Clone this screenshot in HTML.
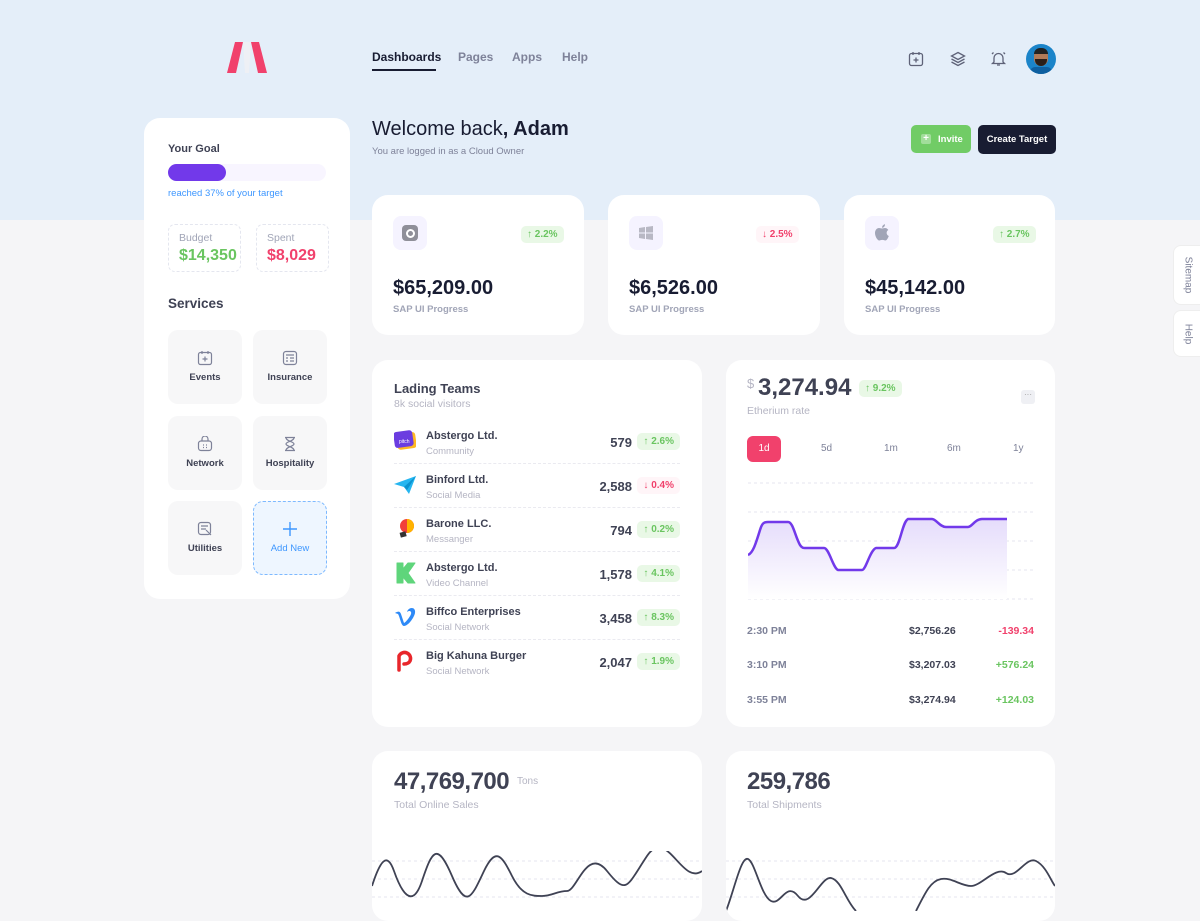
<!DOCTYPE html>
<html><head><meta charset="utf-8"><style>
*{box-sizing:border-box;margin:0;padding:0}
body{width:1200px;height:900px;overflow:hidden;font-family:"Liberation Sans",sans-serif;background:#f5f5f7;position:relative;color:#181c32}
.top{position:absolute;left:0;top:0;width:1200px;height:220px;background:#e4eef9}
.abs{position:absolute}
.card{position:absolute;background:#fff;border-radius:16px}
.nav{font-size:12px;font-weight:bold;color:#7e8299;top:50px}
.badge{position:absolute;font-size:10px;font-weight:bold;padding:3px 6px;border-radius:5px;background:#e9f8e6;color:#6ac560}
.badge.r{background:#fff5f8;color:#f1416c}
.svc{position:absolute;width:74px;height:74px;background:#f7f7f8;border-radius:10px;text-align:center;font-size:9.5px;font-weight:bold;color:#3f4254}
.svc svg{display:block;margin:20px auto 6px}
.row{position:absolute;left:22px;width:286px;height:44px}
.row .n{position:absolute;left:32px;top:4px;font-size:11px;font-weight:bold;color:#3f4254}
.row .s{position:absolute;left:32px;top:20px;font-size:9.5px;color:#b5b5c3}
.row .v{position:absolute;right:48px;top:9px;font-size:13px;font-weight:bold;color:#3f4254}
.row .badge{right:0;top:7px}
.row .ic{position:absolute;left:0;top:4px;width:22px;height:22px}
.dash{position:absolute;left:22px;width:286px;border-top:1px dashed #eaeaf0}
.tab{position:absolute;left:1173px;width:30px;background:#fff;border-radius:8px 0 0 8px;border:1px solid #eee}
.tab span{position:absolute;left:50%;top:50%;transform:translate(-50%,-50%) rotate(90deg);font-size:10px;color:#7e8299;white-space:nowrap}
</style></head><body>
<div class="top"></div>
<svg class="abs" style="left:226px;top:42px" width="42" height="32" viewBox="0 0 42 32"><path d="M9 0h8L10 31H1z" fill="#f1416c"/><path d="M25 0h8l8 31h-9z" fill="#f1416c"/><path d="M17 0h8l-2 31h-4z" fill="#eef0f5"/></svg>
<div class="abs nav" style="left:372px;color:#181c32">Dashboards</div>
<div class="abs" style="left:372px;top:69px;width:64px;height:2px;background:#181c32"></div>
<div class="abs nav" style="left:458px">Pages</div>
<div class="abs nav" style="left:512px">Apps</div>
<div class="abs nav" style="left:562px">Help</div>
<svg class="abs" style="left:908px;top:51px" width="16" height="16" viewBox="0 0 16 16" fill="none" stroke="#5e6278" stroke-width="1.3"><rect x="1.5" y="2.5" width="13" height="12" rx="2"/><path d="M5 1v3M11 1v3M8 6.5v5M5.5 9h5"/></svg>
<svg class="abs" style="left:950px;top:51px" width="16" height="16" viewBox="0 0 16 16" fill="none" stroke="#5e6278" stroke-width="1.3"><path d="M8 1.5l6.5 3.5L8 8.5 1.5 5z"/><path d="M1.5 8L8 11.5 14.5 8M1.5 11L8 14.5 14.5 11"/></svg>
<svg class="abs" style="left:990px;top:50px" width="17" height="17" viewBox="0 0 17 17" fill="none" stroke="#5e6278" stroke-width="1.3"><path d="M4 12V8a4.5 4.5 0 019 0v4l1.5 1.5h-12zM7 15h3M2 4l1.5-1.5M15 4l-1.5-1.5"/></svg>
<div class="abs" style="left:1026px;top:44px;width:30px;height:30px;border-radius:50%;background:#1b84c9;overflow:hidden"><div style="position:absolute;left:8px;top:5px;width:14px;height:17px;border-radius:7px;background:#b07a58"></div><div style="position:absolute;left:8px;top:4px;width:14px;height:6px;border-radius:7px 7px 0 0;background:#222"></div><div style="position:absolute;left:9px;top:15px;width:12px;height:7px;border-radius:0 0 6px 6px;background:#2a1e18"></div><div style="position:absolute;left:4px;top:23px;width:22px;height:10px;border-radius:8px;background:#0e5fa0"></div></div>

<div class="card" style="left:144px;top:118px;width:206px;height:481px">
<div class="abs" style="left:24px;top:25px;font-size:11px;font-weight:bold;color:#3f4254">Your Goal</div>
<div class="abs" style="left:24px;top:46px;width:158px;height:17px;border-radius:9px;background:#f8f5ff"><div style="width:58px;height:17px;border-radius:9px;background:#7239ea"></div></div>
<div class="abs" style="left:24px;top:70px;font-size:9.5px;color:#3e97ff">reached 37% of your target</div>
<div class="abs" style="left:24px;top:106px;width:73px;height:48px;border:1px dashed #e4e6ef;border-radius:7px"><div style="position:absolute;left:10px;top:7px;font-size:10.5px;color:#a1a5b7">Budget</div><div style="position:absolute;left:10px;top:22px;font-size:16px;font-weight:bold;color:#6ac560">$14,350</div></div>
<div class="abs" style="left:112px;top:106px;width:73px;height:48px;border:1px dashed #e4e6ef;border-radius:7px"><div style="position:absolute;left:10px;top:7px;font-size:10.5px;color:#a1a5b7">Spent</div><div style="position:absolute;left:10px;top:22px;font-size:16px;font-weight:bold;color:#f1416c">$8,029</div></div>
<div class="abs" style="left:24px;top:178px;font-size:13.5px;font-weight:bold;color:#3f4254">Services</div>
<div class="svc" style="left:24px;top:212px"><svg width="16" height="16" viewBox="0 0 16 16" fill="none" stroke="#7e8299" stroke-width="1.2"><rect x="1.5" y="2.5" width="13" height="12" rx="2"/><path d="M5 1v3M11 1v3M8 6.5v5M5.5 9h5"/></svg>Events</div>
<div class="svc" style="left:109px;top:212px"><svg width="16" height="16" viewBox="0 0 16 16" fill="none" stroke="#7e8299" stroke-width="1.2"><rect x="1.5" y="1.5" width="13" height="13" rx="2.5"/><path d="M4 5h8M4 8h2M8 8h4M4 11h2M8 11h4"/></svg>Insurance</div>
<div class="svc" style="left:24px;top:298px"><svg width="16" height="16" viewBox="0 0 16 16" fill="none" stroke="#7e8299" stroke-width="1.2"><rect x="1.5" y="5" width="13" height="9.5" rx="2.5"/><path d="M5 5V3a3 3 0 016 0v2M6 9h1M9 9h1M6 11.5h1M9 11.5h1"/></svg>Network</div>
<div class="svc" style="left:109px;top:298px"><svg width="16" height="16" viewBox="0 0 16 16" fill="none" stroke="#7e8299" stroke-width="1.2"><path d="M3 1.5h10M3 14.5h10M4 1.5c0 4 8 4 8 6.5s-8 2.5-8 6.5M12 1.5c0 4-8 4-8 6.5s8 2.5 8 6.5"/></svg>Hospitality</div>
<div class="svc" style="left:24px;top:383px"><svg width="16" height="16" viewBox="0 0 16 16" fill="none" stroke="#7e8299" stroke-width="1.2"><rect x="1.5" y="1.5" width="12" height="12" rx="2.5"/><path d="M4 5h7M4 8h5M9 9l5 5"/></svg>Utilities</div>
<div class="svc" style="left:109px;top:383px;background:#eef6ff;border:1px dashed #7db9ff;color:#3e97ff;font-weight:normal"><svg width="16" height="16" viewBox="0 0 16 16" fill="none" stroke="#3e97ff" stroke-width="1.4" style="margin-top:19px"><path d="M8 1v14M1 8h14"/></svg>Add New</div>
</div>

<div class="abs" style="left:372px;top:118px;font-size:20px;color:#181c32">Welcome back<b>, Adam</b></div>
<div class="abs" style="left:372px;top:146px;font-size:9.5px;color:#7e8299">You are logged in as a Cloud Owner</div>
<div class="abs" style="left:911px;top:125px;width:60px;height:28px;background:#71cc66;border-radius:5px;color:#fff;font-size:9.5px;font-weight:bold"><div style="position:absolute;left:10px;top:9px;width:10px;height:10px;background:rgba(255,255,255,.35);border-radius:2px;text-align:center;line-height:10px;font-size:10px">+</div><span style="position:absolute;left:27px;top:9px">Invite</span></div>
<div class="abs" style="left:978px;top:125px;width:78px;height:29px;background:#181c32;border-radius:5px;color:#fff;font-size:9.5px;font-weight:bold;text-align:center;line-height:29px">Create Target</div>

<div class="card" style="left:372px;top:195px;width:212px;height:140px">
<div class="abs" style="left:21px;top:21px;width:34px;height:34px;border-radius:8px;background:#f5f3ff"><div style="position:absolute;left:9px;top:9px;width:16px;height:16px;border-radius:4px;background:#8f8f99"><div style="position:absolute;left:3.5px;top:3.5px;width:9px;height:9px;border-radius:50%;border:2px solid #fff"></div></div></div>
<div class="badge" style="left:149px;top:31px">↑ 2.2%</div>
<div class="abs" style="left:21px;top:82px;font-size:20px;font-weight:bold">$65,209.00</div>
<div class="abs" style="left:21px;top:109px;font-size:9.5px;font-weight:bold;color:#a1a5b7">SAP UI Progress</div></div>
<div class="card" style="left:608px;top:195px;width:212px;height:140px">
<div class="abs" style="left:21px;top:21px;width:34px;height:34px;border-radius:8px;background:#f5f3ff"><svg style="position:absolute;left:9px;top:9px" width="16" height="16" viewBox="0 0 16 16" fill="#b8b8c4"><path d="M1 3l6-1v5.5H1zM8 2l7-1v6.5H8zM1 8.5h6V14l-6-1zM8 8.5h7V15l-7-1z"/></svg></div>
<div class="badge r" style="left:148px;top:31px">↓ 2.5%</div>
<div class="abs" style="left:21px;top:82px;font-size:20px;font-weight:bold">$6,526.00</div>
<div class="abs" style="left:21px;top:109px;font-size:9.5px;font-weight:bold;color:#a1a5b7">SAP UI Progress</div></div>
<div class="card" style="left:844px;top:195px;width:211px;height:140px">
<div class="abs" style="left:21px;top:21px;width:34px;height:34px;border-radius:8px;background:#f5f3ff"><svg style="position:absolute;left:10px;top:8px" width="14" height="17" viewBox="0 0 14 17" fill="#a1a5b7"><path d="M7 4.5c1-0 2-.5 3-.5 2 0 3 1.5 3.3 2-2.5 1.5-2 5 .5 6-.7 2-2 4.5-3.5 4.5-1 0-1.5-.6-3-.6s-2 .6-3 .6C2.5 16.5 0 12.5 0 9c0-3 2-5 4-5 1 0 2 .5 3 .5zM7 3.8C7 2 8.5.5 10 .3c.2 1.8-1.3 3.6-3 3.5z"/></svg></div>
<div class="badge" style="left:149px;top:31px">↑ 2.7%</div>
<div class="abs" style="left:21px;top:82px;font-size:20px;font-weight:bold">$45,142.00</div>
<div class="abs" style="left:21px;top:109px;font-size:9.5px;font-weight:bold;color:#a1a5b7">SAP UI Progress</div></div>

<div class="card" style="left:372px;top:360px;width:330px;height:367px">
<div class="abs" style="left:22px;top:21px;font-size:13px;font-weight:bold;color:#3f4254">Lading Teams</div>
<div class="abs" style="left:22px;top:38px;font-size:10.5px;color:#b5b5c3">8k social visitors</div>
<div class="row" style="top:66px"><svg class="ic" viewBox="0 0 22 22"><rect x="3" y="3" width="19" height="16" rx="3" fill="#ffb822" transform="rotate(-8 12 11)"/><rect x="0" y="1" width="19" height="16" rx="3" fill="#6b3de0" transform="rotate(-8 10 9)"/><text x="5" y="13" font-size="5" fill="#fff" font-family="Liberation Sans">pitch</text></svg><div class="n">Abstergo Ltd.</div><div class="s">Community</div><div class="v">579</div><div class="badge">↑ 2.6%</div></div>
<div class="dash" style="top:103px"></div>
<div class="row" style="top:110px"><svg class="ic" viewBox="0 0 22 22"><path d="M0 10L22 2 15 20 10 13z" fill="#26b6f0"/><path d="M10 13l12-11-9 14z" fill="#0b93d0"/></svg><div class="n">Binford Ltd.</div><div class="s">Social Media</div><div class="v">2,588</div><div class="badge r">↓ 0.4%</div></div>
<div class="dash" style="top:147px"></div>
<div class="row" style="top:154px"><svg class="ic" viewBox="0 0 22 22"><circle cx="13" cy="8" r="7" fill="#f2403a"/><path d="M13 1a7 7 0 010 14z" fill="#ffb300"/><rect x="6" y="14" width="6" height="5" fill="#333" transform="rotate(-15 9 16)"/></svg><div class="n">Barone LLC.</div><div class="s">Messanger</div><div class="v">794</div><div class="badge">↑ 0.2%</div></div>
<div class="dash" style="top:191px"></div>
<div class="row" style="top:198px"><svg class="ic" viewBox="0 0 22 22"><path d="M3 1h6v6l5-6h7l-7 10 7 10h-7l-5-6v6H3z" fill="#5fd57b" stroke="#5fd57b" stroke-width="1" stroke-linejoin="round"/></svg><div class="n">Abstergo Ltd.</div><div class="s">Video Channel</div><div class="v">1,578</div><div class="badge">↑ 4.1%</div></div>
<div class="dash" style="top:235px"></div>
<div class="row" style="top:242px"><svg class="ic" viewBox="0 0 22 22"><path d="M1 7c3-2 5-2 6 1l3 9c2-1 6-6 7-9 1-3-2-4-4-2 1-5 9-6 8 1-1 5-7 13-11 13-3 0-4-9-6-12z" fill="#2e8af7"/></svg><div class="n">Biffco Enterprises</div><div class="s">Social Network</div><div class="v">3,458</div><div class="badge">↑ 8.3%</div></div>
<div class="dash" style="top:279px"></div>
<div class="row" style="top:286px"><svg class="ic" viewBox="0 0 22 22"><path d="M5 20V6a6 6 0 1111 5c-1 2-3 3-6 3" fill="none" stroke="#e8262b" stroke-width="3.5" stroke-linecap="round"/></svg><div class="n">Big Kahuna Burger</div><div class="s">Social Network</div><div class="v">2,047</div><div class="badge">↑ 1.9%</div></div>
</div>

<div class="card" style="left:726px;top:360px;width:329px;height:367px">
<div class="abs" style="left:21px;top:16px;font-size:13px;color:#b5b5c3">$</div>
<div class="abs" style="left:32px;top:14px;font-size:24px;font-weight:bold;color:#3f4254">3,274.94</div>
<div class="badge" style="left:133px;top:20px">↑ 9.2%</div>
<div class="abs" style="left:295px;top:30px;width:14px;height:14px;background:#eff0f4;border-radius:3px;font-size:8px;color:#999;text-align:center;line-height:10px">···</div>
<div class="abs" style="left:21px;top:45px;font-size:10.5px;color:#b5b5c3">Etherium rate</div>
<div class="abs" style="left:21px;top:76px;width:34px;height:26px;background:#f1416c;border-radius:6px;color:#fff;font-size:10px;text-align:center;line-height:26px">1d</div>
<div class="abs" style="left:95px;top:83px;font-size:10px;color:#7e8299">5d</div>
<div class="abs" style="left:158px;top:83px;font-size:10px;color:#7e8299">1m</div>
<div class="abs" style="left:221px;top:83px;font-size:10px;color:#7e8299">6m</div>
<div class="abs" style="left:287px;top:83px;font-size:10px;color:#7e8299">1y</div>
<svg class="abs" style="left:22px;top:118px" width="288" height="124" viewBox="0 0 288 124">
<defs><linearGradient id="g" x1="0" y1="0" x2="0" y2="1"><stop offset="0" stop-color="#e5dcfb"/><stop offset="1" stop-color="#fff"/></linearGradient></defs>
<g stroke="#e4e6ef" stroke-dasharray="3 3"><path d="M0 5h288M0 34h288M0 63h288M0 92h288M0 121h288"/></g>
<path d="M0 77c5-2 8-12 12-25 2-7 4-8 8-8h20c5 0 7 14 12 23 2 3 3 3 6 3h18c5 0 9 20 14 22h24c4 0 8-20 14-22h18c6 0 8-26 14-29h24c4 0 8 8 14 8h22c4 0 7-8 14-8h25v80H0z" fill="url(#g)"/>
<path d="M0 77c5-2 8-12 12-25 2-7 4-8 8-8h20c5 0 7 14 12 23 2 3 3 3 6 3h18c5 0 9 20 14 22h24c4 0 8-20 14-22h18c6 0 8-26 14-29h24c4 0 8 8 14 8h22c4 0 7-8 14-8h25" fill="none" stroke="#7239ea" stroke-width="2.5"/>
</svg>
<div class="abs" style="left:21px;top:265px;font-size:10.5px;font-weight:bold;color:#7e8299">2:30 PM</div><div class="abs" style="left:183px;top:265px;font-size:10.5px;font-weight:bold;color:#3f4254">$2,756.26</div><div class="abs" style="right:21px;top:265px;font-size:10.5px;font-weight:bold;color:#f1416c">-139.34</div>
<div class="abs" style="left:21px;top:299px;font-size:10.5px;font-weight:bold;color:#7e8299">3:10 PM</div><div class="abs" style="left:183px;top:299px;font-size:10.5px;font-weight:bold;color:#3f4254">$3,207.03</div><div class="abs" style="right:21px;top:299px;font-size:10.5px;font-weight:bold;color:#6ac560">+576.24</div>
<div class="abs" style="left:21px;top:334px;font-size:10.5px;font-weight:bold;color:#7e8299">3:55 PM</div><div class="abs" style="left:183px;top:334px;font-size:10.5px;font-weight:bold;color:#3f4254">$3,274.94</div><div class="abs" style="right:21px;top:334px;font-size:10.5px;font-weight:bold;color:#6ac560">+124.03</div>
</div>

<div class="card" style="left:372px;top:751px;width:330px;height:170px;overflow:hidden">
<div class="abs" style="left:22px;top:17px;font-size:24px;font-weight:bold;color:#3f4254;letter-spacing:-.5px">47,769,700</div>
<div class="abs" style="left:145px;top:25px;font-size:10px;color:#b5b5c3">Tons</div>
<div class="abs" style="left:22px;top:48px;font-size:10.5px;color:#b5b5c3">Total Online Sales</div>
<svg class="abs" style="left:0;top:100px" width="330" height="60"><g stroke="#e4e6ef" stroke-dasharray="3 3"><path d="M0 10h330M0 28h330M0 46h330"/></g><path d="M0 35C8 10 15 0 22 20S40 60 50 30 65-10 80 25 100 45 112 20 130 5 140 25 160 45 170 45 185 40 195 40 215-5 235 20 255 35 275 5 310 35 330 20" fill="none" stroke="#3f4254" stroke-width="1.8"/></svg></div>
<div class="card" style="left:726px;top:751px;width:329px;height:170px;overflow:hidden">
<div class="abs" style="left:21px;top:17px;font-size:24px;font-weight:bold;color:#3f4254;letter-spacing:-.5px">259,786</div>
<div class="abs" style="left:21px;top:48px;font-size:10.5px;color:#b5b5c3">Total Shipments</div>
<svg class="abs" style="left:0;top:100px" width="329" height="60"><g stroke="#e4e6ef" stroke-dasharray="3 3"><path d="M0 10h329M0 28h329M0 46h329"/></g><path d="M0 60C8 40 15 5 22 8S35 45 45 50 60 30 72 45 95 25 105 27 120 50 130 60M190 60C200 40 205 30 215 28S235 35 245 35 270 15 280 22 300 5 310 10 325 30 329 35" fill="none" stroke="#3f4254" stroke-width="1.8"/></svg></div>

<div class="tab" style="top:245px;height:60px"><span>Sitemap</span></div>
<div class="tab" style="top:310px;height:47px"><span>Help</span></div>
</body></html>
